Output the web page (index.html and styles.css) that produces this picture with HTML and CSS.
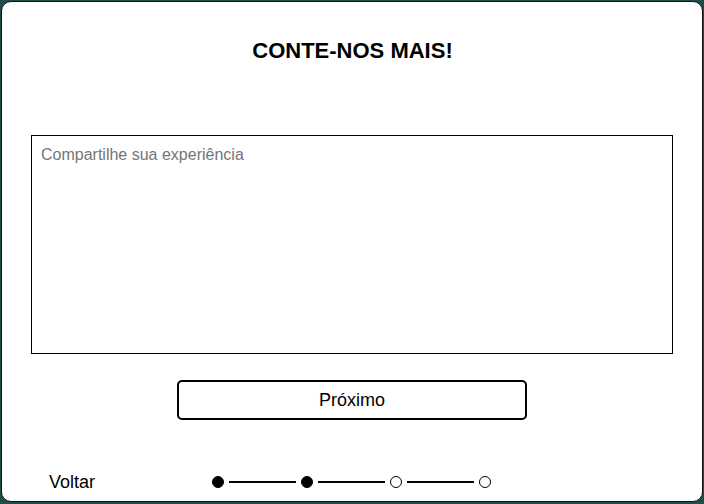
FILE: index.html
```html
<!DOCTYPE html>
<html lang="pt">
<head>
  <meta charset="UTF-8" />
  <title>Conte-nos mais</title>
  <link rel="stylesheet" href="styles.css">
</head>
<body>
  <div class="modal">
    <h1>CONTE-NOS MAIS!</h1>
    <textarea class="experience" placeholder="Compartilhe sua experiência"></textarea>
    <button class="next-btn">Próximo</button>
    <div class="footer">
      <span class="back">Voltar</span>
      <div class="steps">
        <span class="dot done"></span>
        <span class="line"></span>
        <span class="dot done"></span>
        <span class="line"></span>
        <span class="dot"></span>
        <span class="line"></span>
        <span class="dot"></span>
      </div>
    </div>
  </div>
</body>
</html>
```

FILE: styles.css
```css
* {
  box-sizing: border-box;
}
body {
  margin: 0;
  background: #1f4d4a;
  font-family: 'Liberation Sans', Arial, sans-serif;
  color: #000;
}
.modal {
  width: 702px;
  height: 501px;
  margin: 1px 0 0 1px;
  background: #fff;
  border: 1px solid #111;
  border-radius: 10px;
  padding: 36px 28px 0 29px;
  display: flex;
  flex-direction: column;
}
h1 {
  margin: 0;
  font-size: 22px;
  line-height: 26px;
  text-align: center;
}
.experience {
  margin-top: 71px;
  width: 642px;
  height: 219px;
  border: 1px solid #000;
  padding: 9px 9px;
  font-family: 'Liberation Sans', Arial, sans-serif;
  font-size: 16px;
  line-height: 20px;
  resize: none;
  outline: none;
}
.experience::placeholder {
  color: #757575;
}
.next-btn {
  align-self: center;
  margin: 26px 1px 0 0;
  width: 350px;
  height: 40px;
  border: 2px solid #000;
  border-radius: 5px;
  background: #fff;
  font-family: 'Liberation Sans', Arial, sans-serif;
  font-size: 18px;
  color: #000;
}
.footer {
  margin-top: 52px;
  padding-left: 18px;
  height: 20px;
  display: flex;
  align-items: center;
}
.back {
  width: 163px;
  font-size: 18px;
  line-height: 20px;
}
.steps {
  display: flex;
  align-items: center;
  gap: 5px;
}
.dot {
  width: 12px;
  height: 12px;
  border-radius: 50%;
  border: 1px solid #000;
  background: #fff;
}
.dot.done {
  background: #000;
}
.line {
  width: 67px;
  height: 2px;
  background: #000;
}
```
